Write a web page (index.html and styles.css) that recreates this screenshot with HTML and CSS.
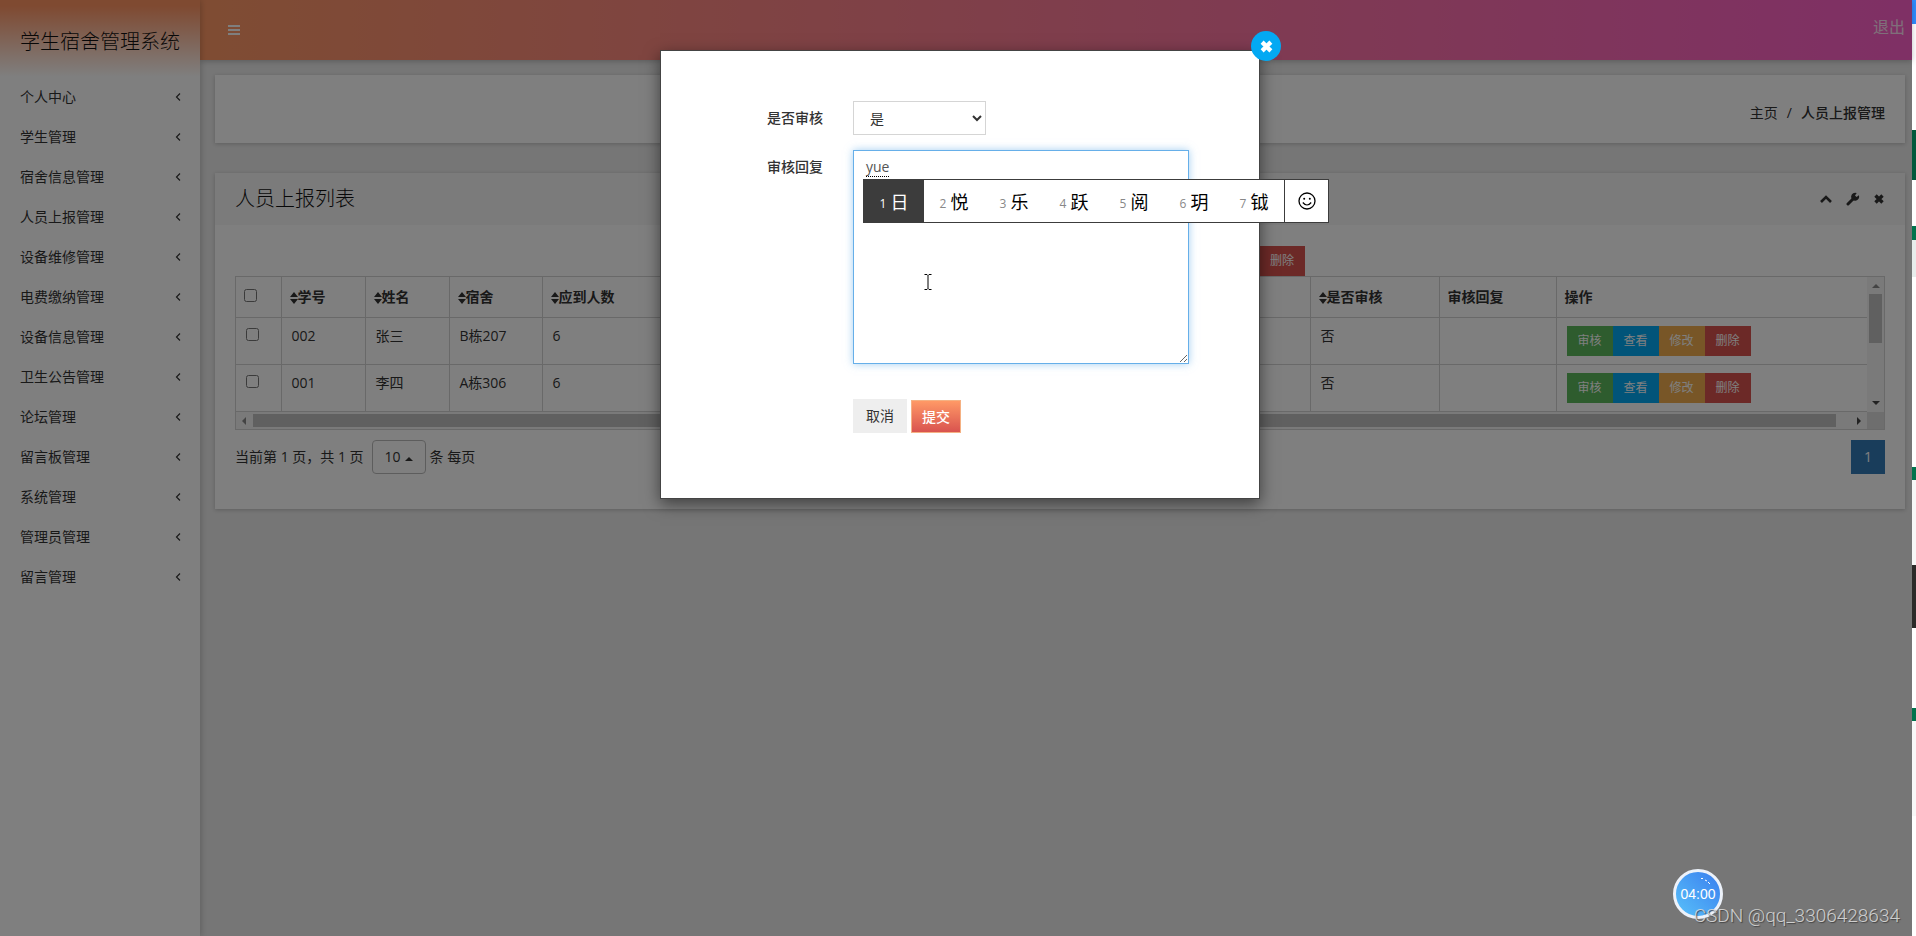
FILE: index.html
```
<!DOCTYPE html>
<html lang="zh-CN">
<head>
<meta charset="utf-8">
<title>学生宿舍管理系统</title>
<link rel="stylesheet" href="styles.css">
</head>
<body>
<svg class="defs" aria-hidden="true">
  <symbol id="chev" viewBox="0 0 6 10"><path d="M5 1.500 1.500 5 5 8.500" fill="none" stroke="currentColor" stroke-width="1.2"/></symbol>
  <symbol id="sort" viewBox="0 0 8 12"><path d="M4 0 8 5H0zM0 7h8l-4 5z" fill="currentColor"/></symbol>
  <symbol id="times" viewBox="0 0 12 12"><path d="M2.5 2.5l7 7M9.5 2.5l-7 7" fill="none" stroke="currentColor" stroke-width="3.4" stroke-linecap="butt"/></symbol>
</svg>
<div class="page">
  <aside class="sidebar">
    <h1 class="brand">学生宿舍管理系统</h1>
    <nav class="menu">
      <a href="#">个人中心<svg><use href="#chev"/></svg></a>
      <a href="#">学生管理<svg><use href="#chev"/></svg></a>
      <a href="#">宿舍信息管理<svg><use href="#chev"/></svg></a>
      <a href="#">人员上报管理<svg><use href="#chev"/></svg></a>
      <a href="#">设备维修管理<svg><use href="#chev"/></svg></a>
      <a href="#">电费缴纳管理<svg><use href="#chev"/></svg></a>
      <a href="#">设备信息管理<svg><use href="#chev"/></svg></a>
      <a href="#">卫生公告管理<svg><use href="#chev"/></svg></a>
      <a href="#">论坛管理<svg><use href="#chev"/></svg></a>
      <a href="#">留言板管理<svg><use href="#chev"/></svg></a>
      <a href="#">系统管理<svg><use href="#chev"/></svg></a>
      <a href="#">管理员管理<svg><use href="#chev"/></svg></a>
      <a href="#">留言管理<svg><use href="#chev"/></svg></a>
    </nav>
  </aside>
  <div class="main">
    <header class="topbar">
      <button class="burger" aria-label="菜单"><span></span><span></span><span></span></button>
      <a class="logout" href="#">退出</a>
    </header>
    <div class="content">
      <nav class="card crumbs"><a href="#">主页</a><span>/</span><strong>人员上报管理</strong></nav>
      <section class="card">
        <div class="card-head">
          <h2>人员上报列表</h2>
          <div class="tools">
            <svg viewBox="0 0 14 12"><path d="M2 9l5-5 5 5" fill="none" stroke="currentColor" stroke-width="2.6"/></svg>
            <svg viewBox="0 0 14 14"><path d="M2 12 8 6" stroke="currentColor" stroke-width="3" stroke-linecap="round"/><path d="M12.8 3.2 10.6 5 9 3.400l1.700-2.300A4 4 0 1 0 12.800 3.200z" fill="currentColor"/></svg>
            <svg viewBox="0 0 12 12"><use href="#times"/></svg>
          </div>
        </div>
        <div class="card-body">
          <div class="toolbar"><button class="btn red">删除</button></div>
          <div class="scrollbox">
            <table>
              <colgroup><col class="c-check"><col class="c-id"><col class="c-id"><col class="c-room"><col><col class="c-state"><col class="c-reply"><col class="c-ops"></colgroup>
              <thead>
                <tr><th><input type="checkbox" aria-label="全选"></th><th><svg><use href="#sort"/></svg>学号</th><th><svg><use href="#sort"/></svg>姓名</th><th><svg><use href="#sort"/></svg>宿舍</th><th><svg><use href="#sort"/></svg>应到人数</th><th><svg><use href="#sort"/></svg>是否审核</th><th>审核回复</th><th>操作</th></tr>
              </thead>
              <tbody>
                <tr><td><input type="checkbox" aria-label="002"></td><td>002</td><td>张三</td><td>B栋207</td><td>6</td><td>否</td><td></td><td><div class="ops"><button class="btn green">审核</button><button class="btn blue">查看</button><button class="btn orange">修改</button><button class="btn red">删除</button></div></td></tr>
                <tr><td><input type="checkbox" aria-label="001"></td><td>001</td><td>李四</td><td>A栋306</td><td>6</td><td>否</td><td></td><td><div class="ops"><button class="btn green">审核</button><button class="btn blue">查看</button><button class="btn orange">修改</button><button class="btn red">删除</button></div></td></tr>
              </tbody>
            </table>
            <div class="vbar"><i class="arrow up"></i><i class="thumb"></i><i class="arrow down"></i></div>
            <div class="hbar"><i class="arrow left"></i><i class="thumb"></i><i class="arrow right"></i></div>
            <div class="corner"></div>
          </div>
          <div class="pager">
            <span>当前第 1 页，共 1 页</span>
            <button class="size">10<i class="arrow up"></i></button>
            <span>条 每页</span>
            <button class="num">1</button>
          </div>
        </div>
      </section>
    </div>
  </div>
  <div class="overlay"></div>
</div>
<div class="edge"></div>

<div class="modal" role="dialog">
  <button class="close" aria-label="关闭"><svg viewBox="0 0 12 12"><use href="#times"/></svg></button>
  <form class="form">
    <label for="pass">是否审核</label>
    <select id="pass"><option>是</option></select>
    <label for="reply">审核回复</label>
    <textarea id="reply" spellcheck="false">yue</textarea>
    <div class="actions"><button type="button" class="cancel">取消</button><button type="button" class="submit">提交</button></div>
  </form>
</div>

<div class="ime">
  <span class="on"><small>1</small>日</span><span><small>2</small>悦</span><span><small>3</small>乐</span><span><small>4</small>跃</span><span><small>5</small>阅</span><span><small>6</small>玥</span><span><small>7</small>钺</span>
  <button aria-label="表情"><svg viewBox="0 0 18 18"><circle cx="9" cy="9" r="8" fill="none" stroke="#000" stroke-width="1.300"/><circle cx="6.200" cy="6.800" r="1"/><circle cx="11.800" cy="6.800" r="1"/><path d="M4.800 10.500q4.200 5 8.400 0" fill="none" stroke="#000" stroke-width="1.200"/></svg></button>
</div>
<svg class="ibeam" viewBox="0 0 8 16"><path d="M0.500 0.500h2.500l1 1 1-1h2.500M4 1.500v13M0.500 15.500h2.500l1-1 1 1h2.500" fill="none" stroke="#000"/></svg>
<div class="timer">04:00<svg viewBox="0 0 10 8"><path d="M0 1.500h2M4 3l2 1M7 5l2 2" stroke="#fff" fill="none"/></svg></div>
<div class="mark">CSDN @qq_3306428634</div>
</body>
</html>
```

FILE: styles.css
```
* { box-sizing: border-box; }
body {
  margin: 0;
  min-height: 100vh;
  display: grid;
  grid-template-columns: 1fr 4px;
  overflow: hidden;
  font: 14px/20px "Open Sans", "Noto Sans CJK SC", sans-serif;
  color: #333;
}
button, select, textarea, input { font: inherit; color: inherit; margin: 0; border-radius: 0; }
button { border: 0; padding: 0; background: none; }
a { color: inherit; text-decoration: none; }
.defs { position: absolute; width: 0; height: 0; }

.page { position: relative; display: grid; grid-template-columns: 200px 1fr; background: #ececec; }
.overlay { position: absolute; inset: 0; background: rgba(0, 0, 0, .5); }
.edge {
  background: linear-gradient(#2f8cff 24px, #fff 24px 120px, #fff 130px, #00593d 130px 180px, #fff 180px 226px, #00734d 226px 240px, #e8edec 240px 277px, #fff 277px 467px, #00734d 467px 480px, #f7f7f7 480px 565px, #2b2a28 565px 628px, #fff 628px 708px, #00734d 708px 721px, #f8f8f8 721px 816px, #fff 816px);
}

.sidebar { background: #fff; box-shadow: 1px 0 6px rgba(0, 0, 0, .2); z-index: 0; }
.brand {
  margin: 0;
  padding: 27px 20px 21px;
  font-size: 20px;
  line-height: 29px;
  font-weight: 300;
  color: #111;
  white-space: nowrap;
  background: linear-gradient(#ff9463 6px, #fff);
}
.menu a { display: flex; align-items: center; justify-content: space-between; height: 40px; padding: 0 19px 0 20px; }
.menu svg { width: 6px; height: 10px; }

.main { display: flex; flex-direction: column; }
.topbar {
  display: flex;
  align-items: center;
  justify-content: space-between;
  height: 60px;
  padding: 0 7px 0 28px;
  background: linear-gradient(90deg, #ff9966, #fe60cb);
  box-shadow: 0 1px 6px rgba(0, 0, 0, .25);
  color: #fff;
}
.burger { display: grid; gap: 2px; width: 12px; }
.burger span { height: 2px; background: #fff; }
.logout { font-size: 16px; padding-bottom: 7px; opacity: .8; }
.content { display: grid; gap: 30px; padding: 15px 7px 15px 15px; }
.card { background: #fff; box-shadow: 0 1px 4px rgba(0, 0, 0, .2); }
.crumbs { display: flex; justify-content: flex-end; align-items: center; gap: 9px; height: 68px; padding: 8px 20px 0; }
.crumbs strong { font-weight: 500; }
.card-head { display: flex; align-items: center; justify-content: space-between; height: 52px; padding: 0 20px; background: #f7f7f7; }
.card-head h2 { margin: 0; font-size: 20px; font-weight: 300; color: #111; }
.tools { display: flex; gap: 13px; }
.tools svg { width: 14px; height: 14px; }
.tools svg:last-child { width: 12px; }
.card-body { padding: 21px 20px 35px; }
.toolbar { display: flex; justify-content: flex-end; width: 490px; margin: 0 auto; }
.btn { width: 46px; height: 30px; font-size: 12px; color: #fff; }
.green { background: #5cb85c; }
.blue { background: #03a9f3; }
.orange { background: #f0ad4e; }
.red { background: #d9534f; }

.scrollbox { display: grid; grid-template-columns: 1fr 17px; border: 1px solid #d2d2d2; }
table { width: 100%; table-layout: fixed; border-collapse: collapse; }
.c-check { width: 45px; }
.c-id { width: 84px; }
.c-room { width: 93px; }
.c-state { width: 129px; }
.c-reply { width: 117px; }
.c-ops { width: 311px; }
th, td { border: solid #d2d2d2; border-width: 0 0 1px 1px; text-align: left; vertical-align: top; }
th { height: 40px; padding: 10px 8px; font-weight: 600; }
td { height: 47px; padding: 8px 10px; }
th:first-child, td:first-child { border-left: 0; }
th svg { width: 8px; height: 12px; vertical-align: -2px; }
input[type="checkbox"] { display: block; width: 13px; height: 13px; margin-top: 2px; }
.ops { display: flex; }

.arrow { width: 0; height: 0; border: 4px solid transparent; }
.arrow.up { border-top: 0; border-bottom-color: #888; }
.arrow.down { border-bottom: 0; border-top-color: #444; }
.arrow.left { border-left: 0; border-right-color: #888; }
.arrow.right { border-right: 0; border-left-color: #444; }
.vbar, .hbar { display: flex; align-items: center; background: #f4f4f4; }
.vbar { flex-direction: column; padding: 7px 0; }
.vbar .thumb { width: 13px; height: 49px; margin: 6px 0 auto; background: #c1c1c1; }
.hbar { height: 17px; padding: 0 6px; }
.hbar .thumb { flex: 1; height: 13px; margin: 0 21px 0 7px; background: #c1c1c1; }
.corner { background: #dcdcdc; }

.pager { display: flex; align-items: center; margin-top: 10px; }
.size { display: flex; align-items: center; justify-content: center; gap: 4px; width: 54px; height: 34px; margin: 0 4px 0 8px; border: 1px solid #bbb; border-radius: 4px; }
.size .arrow { border-bottom-color: #333; margin-top: 4px; }
.num { width: 34px; height: 34px; margin-left: auto; background: #337ab7; color: #fff; }

.modal {
  position: absolute;
  top: 50px;
  left: calc(50% + 2px);
  width: 600px;
  margin-left: -300px;
  padding: 50px 70px 65px 0;
  background: #fff;
  border: 1px solid #444;
  box-shadow: 0 5px 15px rgba(0, 0, 0, .5);
}
.close { position: absolute; top: -20px; right: -22px; width: 30px; height: 30px; border-radius: 50%; background: #03a9f3; color: #fff; display: grid; place-items: center; }
.close svg { width: 15px; height: 15px; }
.form { display: grid; grid-template-columns: 162px 1fr; column-gap: 30px; row-gap: 15px; }
.form label { font-weight: 500; text-align: right; padding-top: 7px; }
select { width: 133px; height: 34px; padding: 0 12px; background: #fff; border: 1px solid #d5d5d5; }
textarea {
  width: 100%;
  height: 214px;
  padding: 6px 12px;
  border: 1px solid #66afe9;
  box-shadow: 0 0 8px rgba(102, 175, 233, .6);
  outline: 0;
  color: #555;
  text-decoration: underline dotted #000 1px;
  text-underline-offset: 4px;
}
.actions { grid-column: 2; display: flex; gap: 4px; align-items: flex-end; padding-top: 20px; }
.cancel { width: 54px; height: 34px; background: #eee; }
.submit { width: 50px; height: 33px; color: #fff; font-weight: 500; background: linear-gradient(#ff9966, #d9534f); border: 1px solid #f5b183; }

.ime { position: absolute; top: 179px; left: 863px; display: flex; height: 44px; background: #fff; border: 1px solid #3c3c3c; color: #000; }
.ime span { display: flex; align-items: center; justify-content: center; gap: 4px; width: 60px; padding-top: 2px; font-size: 18px; }
.ime small { font-size: 12px; color: #888; padding-top: 4px; }
.ime .on { background: #3c3c3c; color: #fff; }
.ime .on small { color: #fff; }
.ime button { width: 44px; border-left: 1px solid #3c3c3c; display: grid; place-items: center; }
.ime button svg { width: 18px; height: 18px; }
.ibeam { position: absolute; left: 924px; top: 274px; width: 8px; height: 16px; }
.timer {
  position: absolute;
  left: 1673px;
  top: 869px;
  width: 50px;
  height: 50px;
  border: 3px solid #edf2fa;
  border-radius: 50%;
  background: linear-gradient(45deg, #58c1fa, #3a7eee);
  color: #fff;
  font: 14px/44px "Liberation Sans", sans-serif;
  text-align: center;
}
.timer svg { position: absolute; left: 25px; top: 5px; width: 10px; height: 8px; }
.mark { position: absolute; right: 16px; bottom: 9px; font: 19px/22px Roboto, "Liberation Sans", sans-serif; font-weight: 300; color: rgba(225, 225, 225, .85); text-shadow: 1px 1px 1px #444; }
```
